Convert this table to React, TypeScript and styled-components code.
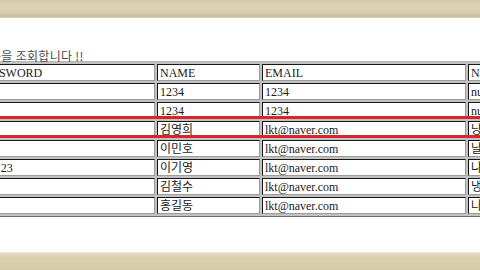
import React from 'react';
import styled, { createGlobalStyle } from 'styled-components';

const GlobalStyle = createGlobalStyle`
  html, body {
    margin: 0;
    padding: 0;
    background: #ffffff;
    overflow: hidden;
  }
`;

const Frame = styled.div`
  width: 480px;
  height: 270px;
  display: flex;
  flex-direction: column;
  overflow: hidden;
`;

const Band = styled.div<{ $bottom?: boolean }>`
  height: 18px;
  flex: none;
  background: ${({ $bottom }) =>
    $bottom
      ? 'linear-gradient(#efe9d8 0, #e2d9bd 2px, #d9cfb0 6px, #d6cba9 100%)'
      : 'linear-gradient(#d6cba9 0, #ddd3b6 6px, #d8cdae 12px, #c9bd99 17px, #e6dfca 18px)'};
`;

const Content = styled.div`
  position: relative;
  flex: 1;
  overflow: hidden;
  padding-top: 32px;
`;

const Title = styled.div`
  margin-left: -47px;
  height: 12px;
  font-family: 'Noto Sans CJK KR', 'Liberation Sans', sans-serif;
  font-size: 12px;
  line-height: 12px;
  letter-spacing: 0.3px;
  color: #4a4a4a;
  white-space: nowrap;
`;

const Table = styled.table`
  margin-top: -1px;
  margin-left: -28px;
  width: 599px;
  table-layout: fixed;
  border-collapse: separate;
  border-spacing: 2px;
  background: #c2c2c2;
  border: 1px solid;
  border-color: #b4b4b4 #6a6a6a #6a6a6a #b4b4b4;
`;

const Cell = styled.td<{ $w?: number }>`
  box-sizing: border-box;
  ${({ $w }) => ($w ? `width: ${$w}px;` : '')}
  height: 16px;
  padding: 2px 2px 0 2px;
  background: #ffffff;
  border: 1px solid;
  border-color: #161616 #9c9c9c #9c9c9c #161616;
  font-family: 'Liberation Serif', 'Noto Sans CJK KR', serif;
  font-size: 12px;
  line-height: 13px;
  color: #1a1a1a;
  white-space: nowrap;
  overflow: hidden;
  vertical-align: top;
`;

const Highlight = styled.div`
  position: absolute;
  top: 98px;
  left: -10px;
  right: -10px;
  height: 16px;
  border: 3px solid #d8252b;
  pointer-events: none;
`;

const widths = [180, 103, 204, 100];

const rows = [
  ['PASSWORD', 'NAME', 'EMAIL', 'NICKNAME'],
  ['123', '1234', '1234', 'null'],
  ['123', '1234', '1234', 'null'],
  ['111', '김영희', 'lkt@naver.com', '냥냥이'],
  ['111', '이민호', 'lkt@naver.com', '날다람쥐'],
  ['abc123', '이기영', 'lkt@naver.com', '냐옹이'],
  ['111', '김철수', 'lkt@naver.com', '냉면'],
  ['111', '홍길동', 'lkt@naver.com', '나그네'],
];

export default function App() {
  return (
    <>
      <GlobalStyle />
      <Frame>
        <Band />
        <Content>
          <Title>회원 목록을 조회합니다 !!</Title>
          <Table>
            <tbody>
              {rows.map((row, i) => (
                <tr key={i}>
                  {row.map((text, j) => (
                    <Cell key={j} $w={i === 0 ? widths[j] : undefined}>
                      {text}
                    </Cell>
                  ))}
                </tr>
              ))}
            </tbody>
          </Table>
          <Highlight />
        </Content>
        <Band $bottom />
      </Frame>
    </>
  );
}
